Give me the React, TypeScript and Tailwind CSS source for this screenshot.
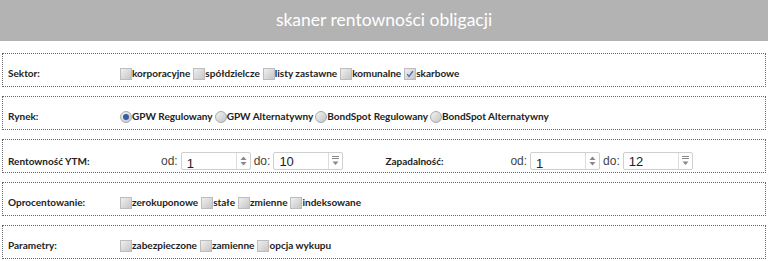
import React from 'react';

const Check = ({ checked = false }: { checked?: boolean }) => (
  <span className="relative inline-block h-[12px] w-[12px] shrink-0 border border-[#bdbdbd] bg-gradient-to-br from-[#f0f0f0] to-[#c6c6c6]">
    {checked && (
      <svg viewBox="0 0 12 12" className="absolute inset-0 h-full w-full">
        <path d="M2.5 6.2 L4.8 8.8 L9.5 2.5" fill="none" stroke="#4b6fb0" strokeWidth="1.6" />
      </svg>
    )}
  </span>
);

const Radio = ({ checked = false }: { checked?: boolean }) => (
  <span className="flex h-[12px] w-[12px] shrink-0 items-center justify-center rounded-full border border-[#a9a9a9] bg-gradient-to-br from-[#f4f4f4] to-[#c4c4c4]">
    {checked && <span className="h-[6px] w-[6px] rounded-full bg-[#2f5fa8]" />}
  </span>
);

const Opt = ({ label, checked, radio }: { label: string; checked?: boolean; radio?: boolean }) => (
  <span className="flex items-center">
    {radio ? <Radio checked={checked} /> : <Check checked={checked} />}
    <span>{label}</span>
  </span>
);

const Spin = ({ value, odd }: { value: string; odd?: boolean }) => (
  <div className="flex h-[18px] w-[70px] items-stretch rounded-[2px] border border-[#cfcfcf] bg-white">
    <span className={`flex-1 pl-[5px] font-['Liberation_Sans',sans-serif] text-[13px] font-normal text-[#222] ${odd ? 'leading-[18px]' : 'leading-[22px]'}`}>
      {value}
    </span>
    <span className="flex w-[14px] flex-col items-center justify-center border-l border-[#dcdcdc] text-[#888]">
      {odd ? (
        <svg width="7" height="12" viewBox="0 0 7 12">
          <path d="M0 1.5 H7 M0 3.5 H7" stroke="#888" strokeWidth="1" />
          <path d="M0.5 6.5 L6.5 6.5 L3.5 10 Z" fill="#888" />
        </svg>
      ) : (
        <svg width="7" height="12" viewBox="0 0 7 12">
          <path d="M0.5 5 L6.5 5 L3.5 1.5 Z" fill="#888" />
          <path d="M0.5 7 L6.5 7 L3.5 10.5 Z" fill="#888" />
        </svg>
      )}
    </span>
  </div>
);

const Range = ({ from, to }: { from: string; to: string }) => (
  <div className="flex items-center font-['Liberation_Sans',sans-serif] text-[12px] font-normal text-[#444]">
    <span className="pr-[3px]">od:</span>
    <Spin value={from} />
    <span className="pl-[3px] pr-[3px]">do:</span>
    <Spin value={to} odd />
  </div>
);

const Box = ({ children, extra = '' }: { children: React.ReactNode; extra?: string }) => (
  <div className={`mx-[2px] flex h-[34px] items-end border border-dotted border-[#666] px-[5px] ${extra}`}>
    {children}
  </div>
);

export default function App() {
  return (
    <div className="h-[261px] w-[768px] bg-white font-['Lato',sans-serif] text-[10px] font-bold text-[#222]">
      <div className="flex h-[41px] items-center justify-center bg-[#b3b3b3] text-[17.5px] font-normal text-white">
        skaner rentowności obligacji
      </div>

      <div className="flex flex-col gap-[9px] pt-[12px]">
        <Box extra="pb-[5px]">
          <span className="w-[112px] shrink-0">Sektor:</span>
          <div className="flex gap-[3px]">
            <Opt label="korporacyjne" />
            <Opt label="spółdzielcze" />
            <Opt label="listy zastawne" />
            <Opt label="komunalne" />
            <Opt label="skarbowe" checked />
          </div>
        </Box>

        <Box extra="pb-[5px]">
          <span className="w-[112px] shrink-0">Rynek:</span>
          <div className="flex gap-[2px]">
            <Opt radio checked label="GPW Regulowany" />
            <Opt radio label="GPW Alternatywny" />
            <Opt radio label="BondSpot Regulowany" />
            <Opt radio label="BondSpot Alternatywny" />
          </div>
        </Box>

        <Box extra="pb-[2px]">
          <span className="w-[153px] shrink-0 pb-[1px]">Rentowność YTM:</span>
          <Range from="1" to="10" />
          <span className="ml-[42px] w-[125px] shrink-0 pb-[1px]">Zapadalność:</span>
          <Range from="1" to="12" />
        </Box>

        <Box extra="pb-[5px]">
          <span className="w-[112px] shrink-0">Oprocentowanie:</span>
          <div className="flex gap-[3px]">
            <Opt label="zerokuponowe" />
            <Opt label="stałe" />
            <Opt label="zmienne" />
            <Opt label="indeksowane" />
          </div>
        </Box>

        <Box extra="pb-[5px]">
          <span className="w-[112px] shrink-0">Parametry:</span>
          <div className="flex gap-[3px]">
            <Opt label="zabezpieczone" />
            <Opt label="zamienne" />
            <Opt label="opcja wykupu" />
          </div>
        </Box>
      </div>
    </div>
  );
}
